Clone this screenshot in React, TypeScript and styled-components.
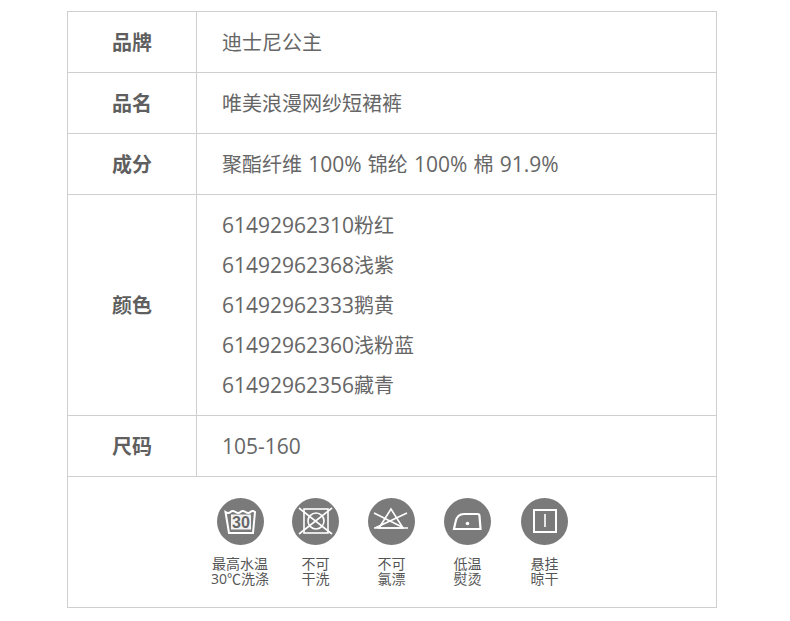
import styled, { createGlobalStyle } from "styled-components"

const GlobalStyle = createGlobalStyle`
    html, body {
        margin: 0;
        padding: 0;
        background: #ffffff;
    }
`

const Page = styled.div`
    width: 790px;
    height: 621px;
    padding: 11px 0 0 67px;
    box-sizing: border-box;
    font-family: "Open Sans", "Noto Sans CJK SC", sans-serif;
    color: #666666;
`

const Table = styled.div`
    width: 650px;
    border: 1px solid #cfcfcf;
    box-sizing: border-box;
`

const Row = styled.div<{ $height: number }>`
    display: grid;
    grid-template-columns: 129px 1fr;
    height: ${(p) => p.$height}px;
    border-bottom: 1px solid #cfcfcf;
    box-sizing: border-box;
`

const Label = styled.div`
    display: flex;
    align-items: center;
    justify-content: center;
    padding-bottom: 2px;
    border-right: 1px solid #cfcfcf;
    font-size: 20px;
    font-weight: 700;
    color: #5f5f5f;
`

const Value = styled.div`
    display: flex;
    flex-direction: column;
    justify-content: center;
    padding: 2px 0 0 25px;
    font-size: 20px;
    line-height: 40px;
    word-spacing: 1px;
`

const Num = styled.span`
    font-size: 21px;
    line-height: 1;
`

const CareRow = styled.div`
    display: flex;
    height: 130px;
    padding: 21px 0 0 134px;
    box-sizing: border-box;
`

const Care = styled.div<{ $width: number }>`
    width: ${(p) => p.$width}px;
    display: flex;
    flex-direction: column;
    align-items: center;
`

const Badge = styled.svg`
    width: 47px;
    height: 47px;
    margin-bottom: 11px;
`

const CareText = styled.div`
    font-size: 14px;
    line-height: 15px;
    color: #555555;
    text-align: center;
    white-space: nowrap;
`

const rows = [
    { label: "品牌", values: ["迪士尼公主"], height: 61 },
    { label: "品名", values: ["唯美浪漫网纱短裙裤"], height: 61 },
    { label: "成分", values: ["聚酯纤维 100% 锦纶 100% 棉 91.9%"], height: 61 },
    {
        label: "颜色",
        values: ["61492962310粉红", "61492962368浅紫", "61492962333鹅黄", "61492962360浅粉蓝", "61492962356藏青"],
        height: 221,
    },
    { label: "尺码", values: ["105-160"], height: 61 },
]

// digits are a little wider than the CJK text next to them
const splitNumbers = (text: string) =>
    text.split(/([0-9.%-]+)/).map((part, i) => (i % 2 ? <Num key={i}>{part}</Num> : part))

const Circle = () => <circle cx="23.5" cy="23.5" r="23.5" fill="#7a7a7a" />

const lines = { fill: "none", stroke: "#fff", strokeWidth: 1.6 }

const App = () => {
    return (
        <Page>
            <GlobalStyle />
            <Table>
                {rows.map((row) => (
                    <Row key={row.label} $height={row.height}>
                        <Label>{row.label}</Label>
                        <Value>
                            {row.values.map((v) => (
                                <div key={v}>{splitNumbers(v)}</div>
                            ))}
                        </Value>
                    </Row>
                ))}
                <CareRow>
                    <Care $width={76}>
                        <Badge viewBox="0 0 47 47">
                            <Circle />
                            <path d="M8.5 14q3 2 5 0t5 0t5 0t5 0t5 0t4.500 0L36 35H12z" {...lines} strokeWidth={2} />
                            <rect x="14" y="16.500" width="20" height="15" fill="#f2f2f2" />
                            <text x="24" y="29.500" textAnchor="middle" fontFamily="Liberation Sans" fontWeight="700" fontSize="16" fill="#666">
                                30
                            </text>
                        </Badge>
                        <CareText>最高水温<br />30℃洗涤</CareText>
                    </Care>
                    <Care $width={75}>
                        <Badge viewBox="0 0 47 47">
                            <Circle />
                            <rect x="12" y="11" width="24" height="24" {...lines} />
                            <circle cx="24" cy="23" r="8" {...lines} />
                            <path d="M7 10L40 36M40 10L7 36" {...lines} />
                        </Badge>
                        <CareText>不可<br />干洗</CareText>
                    </Care>
                    <Care $width={77}>
                        <Badge viewBox="0 0 47 47">
                            <Circle />
                            <path d="M23 11L11 30H35Z" {...lines} />
                            <path d="M6 30H40M6 15L34 29M39 15L7 30" {...lines} />
                        </Badge>
                        <CareText>不可<br />氯漂</CareText>
                    </Care>
                    <Care $width={75}>
                        <Badge viewBox="0 0 47 47">
                            <Circle />
                            <path d="M36.500 31H10L11.500 24Q13 16 20 16H33.500Q35.500 16 35.500 18Z" {...lines} strokeWidth={2.2} />
                            <circle cx="23.500" cy="25.500" r="1.800" fill="#fff" />
                        </Badge>
                        <CareText>低温<br />熨烫</CareText>
                    </Care>
                    <Care $width={79}>
                        <Badge viewBox="0 0 47 47">
                            <Circle />
                            <rect x="13" y="12" width="22" height="22" {...lines} strokeWidth={2} />
                            <path d="M24 16V29" {...lines} stroke="#e6e6e6" strokeWidth={2} />
                        </Badge>
                        <CareText>悬挂<br />晾干</CareText>
                    </Care>
                </CareRow>
            </Table>
        </Page>
    )
}

export default App
